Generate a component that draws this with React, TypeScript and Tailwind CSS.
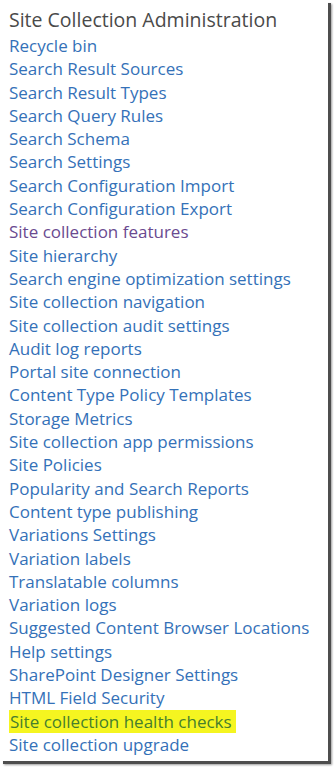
import React from "react";

const links: { t: string; v?: boolean; h?: boolean }[] = [
  { t: "Recycle bin" },
  { t: "Search Result Sources" },
  { t: "Search Result Types" },
  { t: "Search Query Rules" },
  { t: "Search Schema" },
  { t: "Search Settings" },
  { t: "Search Configuration Import" },
  { t: "Search Configuration Export" },
  { t: "Site collection features", v: true },
  { t: "Site hierarchy" },
  { t: "Search engine optimization settings" },
  { t: "Site collection navigation" },
  { t: "Site collection audit settings" },
  { t: "Audit log reports" },
  { t: "Portal site connection" },
  { t: "Content Type Policy Templates" },
  { t: "Storage Metrics" },
  { t: "Site collection app permissions" },
  { t: "Site Policies" },
  { t: "Popularity and Search Reports" },
  { t: "Content type publishing" },
  { t: "Variations Settings" },
  { t: "Variation labels" },
  { t: "Translatable columns" },
  { t: "Variation logs" },
  { t: "Suggested Content Browser Locations" },
  { t: "Help settings" },
  { t: "SharePoint Designer Settings" },
  { t: "HTML Field Security" },
  { t: "Site collection health checks", h: true },
  { t: "Site collection upgrade" },
];

export default function App() {
  return (
    <div className="w-[335px] h-[768px] bg-white overflow-hidden">
      <div
        className="w-[328px] h-[761px] bg-white shadow-[3px_3px_0_#4d4d4d,4px_4px_2px_#9a9a9a] pt-[7px] pl-[9px]"
        style={{ fontFamily: '"Open Sans", "Noto Sans", sans-serif' }}
      >
        <div className="text-[19.5px] leading-[26px] text-[#4a4a4a] mb-[1px]">
          Site Collection Administration
        </div>
        <ul className="flex flex-col">
          {links.map((l) => (
            <li key={l.t} className="text-[17px] leading-[23.3px] whitespace-nowrap">
              {l.h ? (
                <span className="inline-block ml-0 pl-[1px] -ml-[1px] pr-[4px] bg-[#f5f520] text-[#467e2e]">
                  {l.t}
                </span>
              ) : (
                <span className={l.v ? "text-[#6a4a90]" : "text-[#3471b8]"}>{l.t}</span>
              )}
            </li>
          ))}
        </ul>
      </div>
    </div>
  );
}
